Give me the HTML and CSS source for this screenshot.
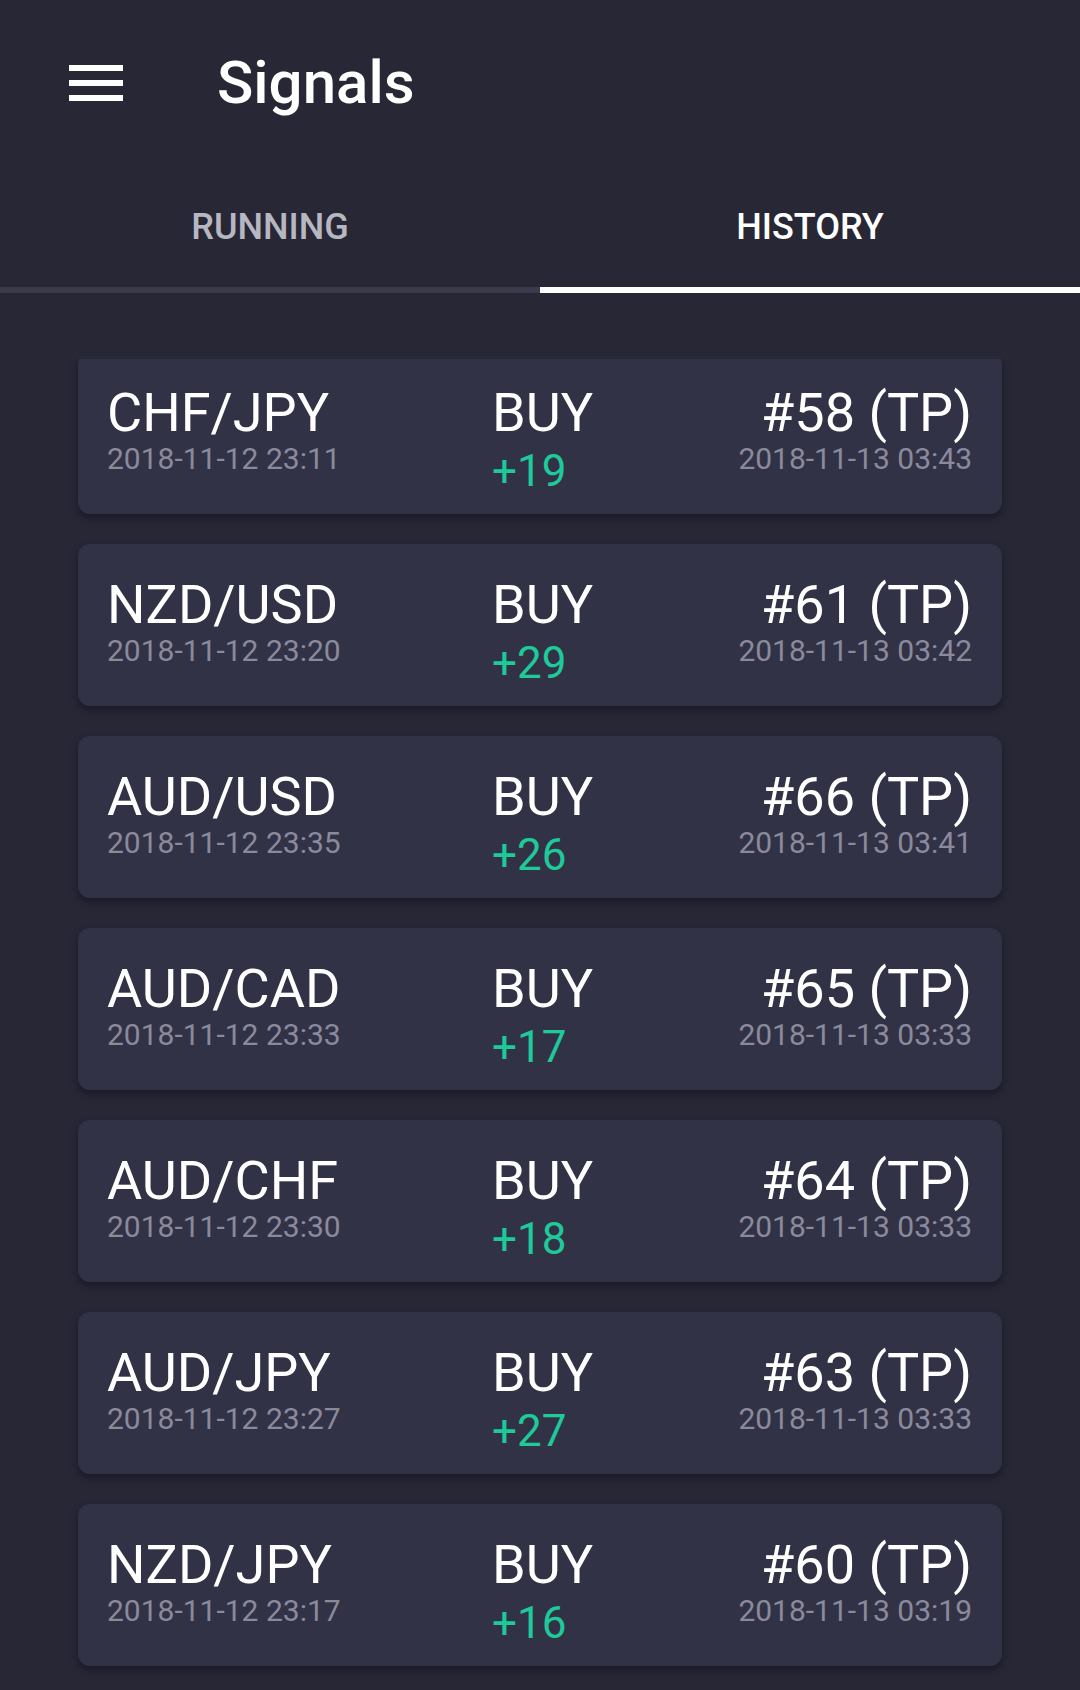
FILE: index.html
```html
<!DOCTYPE html>
<html>
<head>
<meta charset="utf-8">
<link rel="stylesheet" href="styles.css">
</head>
<body>
<header class="appbar">
  <svg class="menu" width="54" height="36" viewBox="0 0 54 36"><rect x="0" y="0" width="54" height="6" fill="#fff"/><rect x="0" y="15" width="54" height="6" fill="#fff"/><rect x="0" y="30" width="54" height="6" fill="#fff"/></svg>
  <h1 class="title">Signals</h1>
</header>
<nav class="tabs">
  <div class="tab">RUNNING</div>
  <div class="tab active">HISTORY</div>
</nav>
<main class="list">
  <div class="list-inner">
    <div class="card"><div class="col"><div class="big">CHF/JPY</div><div class="date">2018-11-12 23:11</div></div><div class="col"><div class="big">BUY</div><div class="pips">+19</div></div><div class="col right"><div class="big">#58 (TP)</div><div class="date">2018-11-13 03:43</div></div></div>
    <div class="card"><div class="col"><div class="big">NZD/USD</div><div class="date">2018-11-12 23:20</div></div><div class="col"><div class="big">BUY</div><div class="pips">+29</div></div><div class="col right"><div class="big">#61 (TP)</div><div class="date">2018-11-13 03:42</div></div></div>
    <div class="card"><div class="col"><div class="big">AUD/USD</div><div class="date">2018-11-12 23:35</div></div><div class="col"><div class="big">BUY</div><div class="pips">+26</div></div><div class="col right"><div class="big">#66 (TP)</div><div class="date">2018-11-13 03:41</div></div></div>
    <div class="card"><div class="col"><div class="big">AUD/CAD</div><div class="date">2018-11-12 23:33</div></div><div class="col"><div class="big">BUY</div><div class="pips">+17</div></div><div class="col right"><div class="big">#65 (TP)</div><div class="date">2018-11-13 03:33</div></div></div>
    <div class="card"><div class="col"><div class="big">AUD/CHF</div><div class="date">2018-11-12 23:30</div></div><div class="col"><div class="big">BUY</div><div class="pips">+18</div></div><div class="col right"><div class="big">#64 (TP)</div><div class="date">2018-11-13 03:33</div></div></div>
    <div class="card"><div class="col"><div class="big">AUD/JPY</div><div class="date">2018-11-12 23:27</div></div><div class="col"><div class="big">BUY</div><div class="pips">+27</div></div><div class="col right"><div class="big">#63 (TP)</div><div class="date">2018-11-13 03:33</div></div></div>
    <div class="card"><div class="col"><div class="big">NZD/JPY</div><div class="date">2018-11-12 23:17</div></div><div class="col"><div class="big">BUY</div><div class="pips">+16</div></div><div class="col right"><div class="big">#60 (TP)</div><div class="date">2018-11-13 03:19</div></div></div>
  </div>
</main>
</body>
</html>
```
FILE: styles.css
```css
html, body {
  margin: 0;
  padding: 0;
}
body {
  width: 1080px;
  height: 1690px;
  overflow: hidden;
  background: #272736;
  font-family: Roboto, "Noto Sans", sans-serif;
  color: #fff;
}
.appbar {
  height: 160px;
  box-sizing: border-box;
  padding-top: 48px;
  display: flex;
  align-items: flex-start;
}
.menu {
  display: block;
  margin-left: 69px;
  margin-top: 17px;
}
.title {
  margin: 0 0 0 94px;
  font-size: 60px;
  font-weight: 500;
  line-height: 70px;
  color: #fff;
}
.tabs {
  display: flex;
  border-bottom: 6px solid #3a3a4b;
}
.tab {
  flex: 1;
  box-sizing: border-box;
  height: 127px;
  padding-top: 7px;
  line-height: 120px;
  text-align: center;
  font-size: 36px;
  font-weight: 500;
  color: #b7b7c1;
  position: relative;
}
.tab.active {
  color: #fff;
}
.tab.active::after {
  content: "";
  position: absolute;
  left: 0;
  right: 0;
  bottom: -6px;
  height: 6px;
  background: #fff;
}
.list {
  margin-top: 66px;
  height: 1331px;
  overflow: hidden;
}
.list-inner {
  margin-top: -7px;
  display: flex;
  flex-direction: column;
  gap: 30px;
}
.card {
  margin: 0 78px;
  height: 162px;
  box-sizing: border-box;
  padding: 30px 30px 0 29px;
  background: #323247;
  border-radius: 12px;
  box-shadow: 0 4px 8px rgba(0, 0, 0, 0.35);
  display: grid;
  grid-template-columns: 385px 1fr auto;
}
.col.right {
  text-align: right;
}
.big {
  font-size: 54px;
  line-height: 61px;
  color: #fff;
  white-space: nowrap;
}
.date {
  font-size: 30px;
  line-height: 32px;
  color: #8a8a9c;
  white-space: nowrap;
}
.pips {
  font-size: 44px;
  line-height: 56px;
  color: #1ec99a;
}
```
